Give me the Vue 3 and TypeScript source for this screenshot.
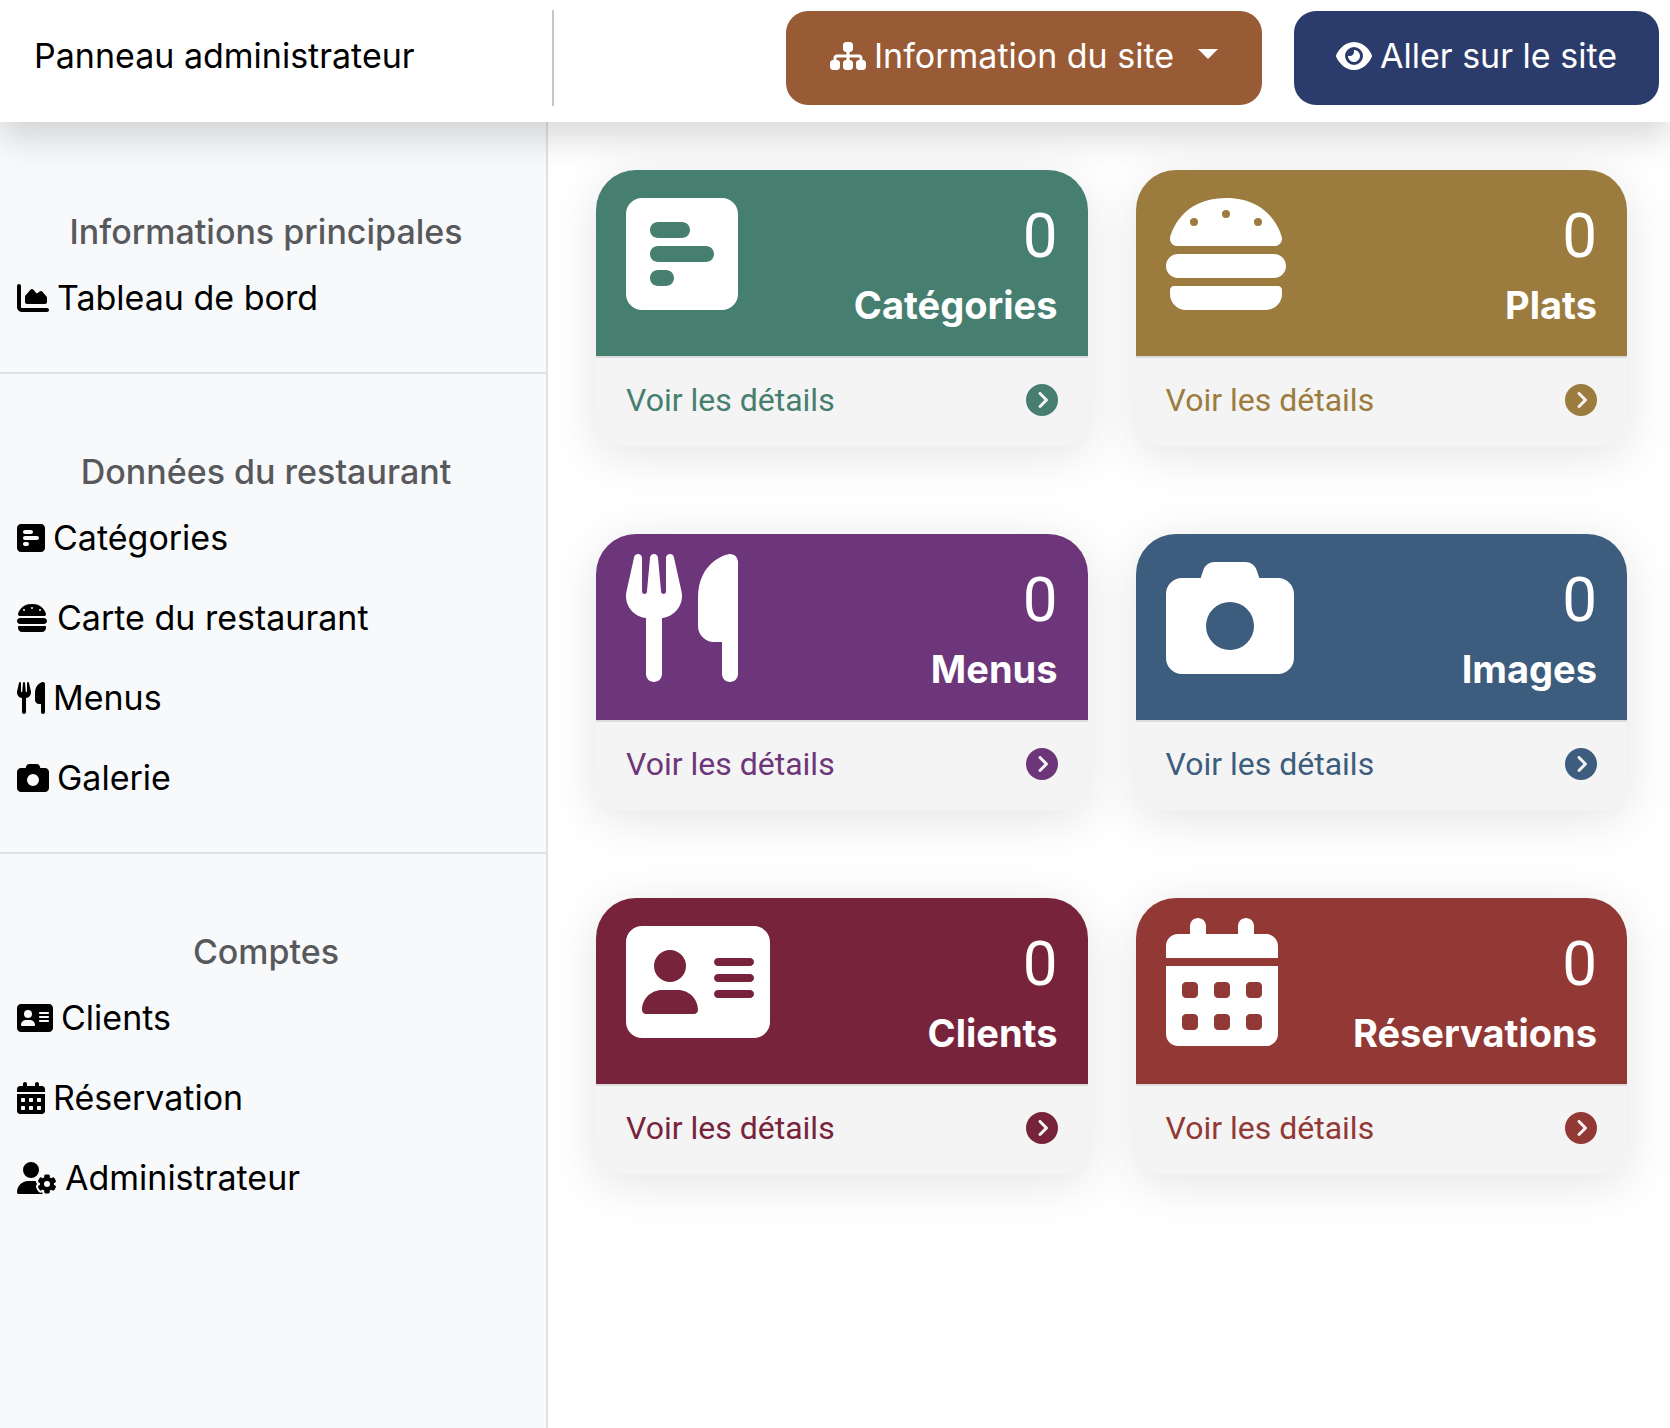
<script setup lang="ts">
interface Icon {
  box: string
  width: number
  path: string
}

const icons: Record<string, Icon> = {
  chart: {
    box: '0 0 512 512',
    width: 512,
    path: 'M64 64c0-17.7-14.3-32-32-32S0 46.3 0 64V400c0 44.2 35.8 80 80 80H480c17.7 0 32-14.3 32-32s-14.3-32-32-32H80c-8.8 0-16-7.2-16-16V64zm96 288H448c17.7 0 32-14.3 32-32V251.8c0-7.6-2.7-15-7.7-20.8l-65.8-76.8c-12.1-14.2-33.7-15-46.9-1.8l-21 21c-10 10-26.4 9.2-35.4-1.6l-39.2-47c-12.6-15.1-35.7-15.4-48.7-.6L135.9 215c-5.1 5.8-7.9 13.3-7.9 21.1v84c0 17.7 14.3 32 32 32z',
  },
  poll: {
    box: '0 0 448 512',
    width: 448,
    path: 'M448 96c0-35.3-28.7-64-64-64H64C28.7 32 0 60.7 0 96V416c0 35.3 28.7 64 64 64H384c35.3 0 64-28.7 64-64V96zM256 160c0 17.7-14.3 32-32 32l-96 0c-17.7 0-32-14.3-32-32s14.3-32 32-32l96 0c17.7 0 32 14.3 32 32zm64 64c17.7 0 32 14.3 32 32s-14.3 32-32 32l-192 0c-17.7 0-32-14.3-32-32s14.3-32 32-32l192 0zM192 352c0 17.7-14.3 32-32 32H128c-17.7 0-32-14.3-32-32s14.3-32 32-32h32c17.7 0 32 14.3 32 32z',
  },
  burger: {
    box: '16 0 512 512',
    width: 512,
    path: 'M61.1 224C45 224 32 211 32 194.9c0-1.9 .2-3.7 .6-5.6C37.9 168.3 78.8 32 256 32s218.1 136.3 223.4 157.3c.5 1.9 .6 3.7 .6 5.6c0 16.1-13 29.1-29.1 29.1H61.1zM144 128a16 16 0 1 0 -32 0 16 16 0 1 0 32 0zm240 16a16 16 0 1 0 0-32 16 16 0 1 0 0 32zM272 96a16 16 0 1 0 -32 0 16 16 0 1 0 32 0zM16 304c0-26.5 21.5-48 48-48H448c26.5 0 48 21.5 48 48s-21.5 48-48 48H64c-26.5 0-48-21.5-48-48zm16 96c0-8.8 7.2-16 16-16H464c8.8 0 16 7.2 16 16v16c0 35.3-28.7 64-64 64H96c-35.3 0-64-28.7-64-64V400z',
  },
  utensils: {
    box: '0 0 448 512',
    width: 448,
    path: 'M416 0C400 0 288 32 288 176V288c0 35.3 28.7 64 64 64h32V480c0 17.7 14.3 32 32 32s32-14.3 32-32V32c0-17.7-14.3-32-32-32zM64 16C64 7.8 57.9 1 49.7 .1S34.2 4.6 32.4 12.5L2.1 148.8C.7 155.1 0 161.5 0 167.9c0 45.9 35.1 83.6 80 87.7V480c0 17.7 14.3 32 32 32s32-14.3 32-32V255.6c44.9-4.1 80-41.8 80-87.7c0-6.4-.7-12.8-2.1-19.1L191.6 12.5c-1.8-8-9.3-13.3-17.4-12.4S160 7.8 160 16V150.2c0 5.4-4.4 9.8-9.8 9.8c-5.1 0-9.3-3.9-9.8-9L127.9 14.6C127.2 6.3 120.3 0 112 0s-15.2 6.3-15.9 14.6L83.7 151c-.5 5.1-4.7 9-9.8 9c-5.4 0-9.8-4.4-9.8-9.8V16z',
  },
  camera: {
    box: '0 0 512 512',
    width: 512,
    path: 'M149.1 64.8L138.7 96H64C28.7 96 0 124.7 0 160V416c0 35.3 28.7 64 64 64H448c35.3 0 64-28.7 64-64V160c0-35.3-28.7-64-64-64H373.3L362.9 64.8C356.4 45.2 338.1 32 317.4 32H194.6c-20.7 0-39 13.2-45.5 32.8zM256 192a96 96 0 1 1 0 192 96 96 0 1 1 0-192z',
  },
  idCard: {
    box: '0 0 576 512',
    width: 576,
    path: 'M64 32C28.7 32 0 60.7 0 96V416c0 35.3 28.7 64 64 64H512c35.3 0 64-28.7 64-64V96c0-35.3-28.7-64-64-64H64zM144 288h64c44.2 0 80 35.8 80 80c0 8.8-7.2 16-16 16H80c-8.8 0-16-7.2-16-16c0-44.2 35.8-80 80-80zM112 192a64 64 0 1 1 128 0 64 64 0 1 1 -128 0zM368 160H496c8.8 0 16 7.2 16 16s-7.2 16-16 16H368c-8.8 0-16-7.2-16-16s7.2-16 16-16zM368 224H496c8.8 0 16 7.2 16 16s-7.2 16-16 16H368c-8.8 0-16-7.2-16-16s7.2-16 16-16zM368 288H496c8.8 0 16 7.2 16 16s-7.2 16-16 16H368c-8.8 0-16-7.2-16-16s7.2-16 16-16z',
  },
  calendar: {
    box: '0 0 448 512',
    width: 448,
    path:
      'M128 0c17.7 0 32 14.3 32 32V64H288V32c0-17.7 14.3-32 32-32s32 14.3 32 32V64h48c26.5 0 48 21.5 48 48v48H0V112C0 85.5 21.5 64 48 64H96V32c0-17.7 14.3-32 32-32zM0 192H448V464c0 26.5-21.5 48-48 48H48c-26.5 0-48-21.5-48-48V192z' +
      [256, 384]
        .flatMap((y) =>
          [80, 208, 336].map(
            (x) =>
              `M${x} ${y}h32c8.8 0 16 7.2 16 16v32c0 8.8-7.2 16-16 16h-32c-8.8 0-16-7.2-16-16v-32c0-8.8 7.2-16 16-16z`,
          ),
        )
        .join(''),
  },
  userGear: {
    box: '0 0 640 512',
    width: 640,
    path: 'M224 0a128 128 0 1 1 0 256 128 128 0 1 1 0-256zM178.3 304h91.4c11.8 0 23.4 1.2 34.5 3.3c-2.1 18.5 7.4 35.6 21.8 44.8c-16.6 10.6-26.7 31.6-20 53.3c4 12.9 9.4 25.5 16.4 37.6s15.2 23.1 24.4 33c15.7 16.9 39.6 18.4 57.2 8.7v.9c0 9.2 2.7 18.5 7.9 26.3H29.7C13.3 512 0 498.7 0 482.3C0 383.8 79.8 304 178.3 304zM436 218.2c0-7 4.5-13.3 11.3-14.8c10.5-2.4 21.5-3.7 32.7-3.7s22.2 1.3 32.7 3.7c6.8 1.5 11.3 7.8 11.3 14.8v30.6c7.9 3.4 15.4 7.7 22.3 12.8l24.9-14.3c6.1-3.5 13.7-2.7 18.5 2.4c7.6 8.1 14.3 17.2 20.1 27.2s10.3 20.4 13.5 31c2.1 6.7-1.1 13.7-7.2 17.2l-25 14.4c.4 4 .7 8.1 .7 12.3s-.2 8.2-.7 12.3l25 14.4c6.1 3.5 9.2 10.5 7.2 17.2c-3.3 10.6-7.8 21-13.5 31s-12.5 19.1-20.1 27.2c-4.8 5.1-12.5 5.9-18.5 2.4l-24.9-14.3c-6.9 5.1-14.3 9.4-22.3 12.8v30.6c0 7-4.5 13.3-11.3 14.8c-10.5 2.4-21.5 3.7-32.7 3.7s-22.2-1.3-32.7-3.7c-6.8-1.5-11.3-7.8-11.3-14.8V454.8c-8-3.4-15.6-7.7-22.5-12.9l-24.7 14.3c-6.1 3.5-13.7 2.7-18.5-2.4c-7.6-8.1-14.3-17.2-20.1-27.2s-10.3-20.4-13.5-31c-2.1-6.7 1.1-13.7 7.2-17.2l24.8-14.3c-.4-4.1-.7-8.2-.7-12.4s.2-8.3 .7-12.4L343.8 325c-6.1-3.5-9.2-10.5-7.2-17.2c3.3-10.6 7.7-21 13.5-31s12.5-19.1 20.1-27.2c4.8-5.1 12.4-5.9 18.5-2.4l24.8 14.3c6.9-5.1 14.5-9.4 22.5-12.9V218.2zM480 303.9a48 48 0 1 1 0 96 48 48 0 1 1 0-96z',
  },
}

interface Section {
  title: string
  items: { icon: string; label: string }[]
}

const sections: Section[] = [
  { title: 'Informations principales', items: [{ icon: 'chart', label: 'Tableau de bord' }] },
  {
    title: 'Données du restaurant',
    items: [
      { icon: 'poll', label: 'Catégories' },
      { icon: 'burger', label: 'Carte du restaurant' },
      { icon: 'utensils', label: 'Menus' },
      { icon: 'camera', label: 'Galerie' },
    ],
  },
  {
    title: 'Comptes',
    items: [
      { icon: 'idCard', label: 'Clients' },
      { icon: 'calendar', label: 'Réservation' },
      { icon: 'userGear', label: 'Administrateur' },
    ],
  },
]

const cards = [
  { icon: 'poll', label: 'Catégories', count: 0, tone: 'green' },
  { icon: 'burger', label: 'Plats', count: 0, tone: 'gold' },
  { icon: 'utensils', label: 'Menus', count: 0, tone: 'purple' },
  { icon: 'camera', label: 'Images', count: 0, tone: 'blue' },
  { icon: 'idCard', label: 'Clients', count: 0, tone: 'maroon' },
  { icon: 'calendar', label: 'Réservations', count: 0, tone: 'red' },
]
</script>

<template>
  <div class="page">
    <header class="topbar">
      <a class="brand" href="#">Panneau administrateur</a>
      <div class="actions">
        <button class="btn btn-info" type="button" aria-haspopup="true">
          <svg class="icon" viewBox="0 0 576 512" width="36" height="32" aria-hidden="true">
            <path d="M208 80c0-26.5 21.5-48 48-48h64c26.5 0 48 21.5 48 48v64c0 26.5-21.5 48-48 48h-8v40H464c30.9 0 56 25.1 56 56v32h8c26.5 0 48 21.5 48 48v64c0 26.5-21.5 48-48 48H464c-26.5 0-48-21.5-48-48V368c0-26.5 21.5-48 48-48h8V288c0-4.4-3.6-8-8-8H312v40h8c26.5 0 48 21.5 48 48v64c0 26.5-21.5 48-48 48H256c-26.5 0-48-21.5-48-48V368c0-26.5 21.5-48 48-48h8V280H112c-4.4 0-8 3.6-8 8v32h8c26.5 0 48 21.5 48 48v64c0 26.5-21.5 48-48 48H48c-26.5 0-48-21.5-48-48V368c0-26.5 21.5-48 48-48h8V288c0-30.9 25.1-56 56-56H264V192h-8c-26.5 0-48-21.5-48-48V80z" />
          </svg>
          <span>Information du site</span>
          <span class="caret"></span>
        </button>
        <a class="btn btn-site" href="#">
          <svg class="icon" viewBox="0 0 576 512" width="36" height="32" aria-hidden="true">
            <path d="M288 32c-80.8 0-145.5 36.8-192.6 80.6C48.6 156 17.3 208 2.5 243.7c-3.3 7.9-3.3 16.7 0 24.6C17.3 304 48.6 356 95.4 399.4C142.5 443.2 207.2 480 288 480s145.5-36.8 192.6-80.6c46.8-43.5 78.1-95.4 93-131.1c3.3-7.9 3.3-16.7 0-24.6c-14.9-35.7-46.2-87.7-93-131.1C433.5 68.8 368.8 32 288 32zM144 256a144 144 0 1 1 288 0 144 144 0 1 1 -288 0zm144-64c0 35.3-28.7 64-64 64c-7.1 0-13.9-1.2-20.3-3.3c-5.5-1.8-11.9 1.6-11.7 7.4c.3 6.9 1.3 13.8 3.2 20.7c13.7 51.2 66.4 81.6 117.6 67.9s81.6-66.4 67.9-117.6c-11.1-41.5-47.8-69.4-88.6-71.1c-5.8-.2-9.2 6.1-7.4 11.7c2.1 6.4 3.3 13.2 3.3 20.3z" />
          </svg>
          <span>Aller sur le site</span>
        </a>
      </div>
    </header>

    <div class="body">
      <nav class="sidebar">
        <section v-for="section in sections" :key="section.title" class="group">
          <h2>{{ section.title }}</h2>
          <ul>
            <li v-for="item in section.items" :key="item.label">
              <a href="#">
                <svg
                  class="icon"
                  :viewBox="icons[item.icon].box"
                  :width="icons[item.icon].width / 16"
                  height="32"
                  aria-hidden="true"
                >
                  <path :d="icons[item.icon].path" />
                </svg>
                <span>{{ item.label }}</span>
              </a>
            </li>
          </ul>
        </section>
      </nav>

      <main class="cards">
        <article v-for="card in cards" :key="card.label" class="card" :class="card.tone">
          <div class="card-head">
            <svg
              class="icon"
              :viewBox="icons[card.icon].box"
              :width="icons[card.icon].width / 4"
              height="128"
              aria-hidden="true"
            >
              <path :d="icons[card.icon].path" />
            </svg>
            <div class="figures">
              <div class="count">{{ card.count }}</div>
              <div class="label">{{ card.label }}</div>
            </div>
          </div>
          <a class="card-foot" href="#">
            <span>Voir les détails</span>
            <svg class="icon" viewBox="0 0 512 512" width="32" height="32" aria-hidden="true">
              <path d="M0 256a256 256 0 1 0 512 0A256 256 0 1 0 0 256zM241 377c-9.4 9.4-24.6 9.4-33.9 0s-9.4-24.6 0-33.9l87-87-87-87c-9.4-9.4-9.4-24.6 0-33.9s24.6-9.4 33.9 0L345 239c9.4 9.4 9.4 24.6 0 33.9L241 377z" />
            </svg>
          </a>
        </article>
      </main>
    </div>
  </div>
</template>

<style>
body {
  margin: 0;
  background: #fff;
}
</style>

<style scoped>
.page {
  min-height: 100vh;
  display: flex;
  flex-direction: column;
  font-family: Inter, 'Liberation Sans', sans-serif;
  font-size: 34px;
  line-height: 48px;
  color: #000;
}

.page * {
  box-sizing: border-box;
}

a {
  color: inherit;
  text-decoration: none;
}

.icon {
  flex: none;
  fill: currentColor;
  fill-rule: evenodd;
}

.topbar {
  position: relative;
  z-index: 2;
  display: flex;
  justify-content: space-between;
  padding: 10px 11px 16px 0;
  background: #fff;
  box-shadow: 0 16px 32px rgba(0, 0, 0, 0.15);
}

.brand {
  flex: none;
  width: 554px;
  padding: 22px 34px 26px;
  border-right: 2px solid #c6c6c8;
}

.actions {
  display: flex;
  align-items: flex-start;
  gap: 32px;
  padding-top: 1px;
}

.btn {
  display: flex;
  align-items: center;
  gap: 8px;
  padding: 21px 44px 25px;
  border: 0;
  border-radius: 22px;
  font: inherit;
  color: #fff;
  white-space: nowrap;
}

.btn-info {
  background: #995a36;
}

.btn-site {
  padding-right: 42px;
  padding-left: 42px;
  background: #2b3c6c;
}

.caret {
  margin: 0 0 4px 16px;
  border: 10px solid transparent;
  border-top-color: currentColor;
  border-bottom: 0;
}

.body {
  flex: 1;
  display: flex;
}

.sidebar {
  position: relative;
  z-index: 1;
  flex: none;
  width: 548px;
  padding-top: 12px;
  background: #f8f9fb;
  border-right: 2px solid #dfe1e5;
}

.group {
  padding: 74px 0 34px;
  border-bottom: 2px solid #dfe1e8;
}

.group:last-child {
  border-bottom: 0;
}

.group h2 {
  margin: 0 0 2px;
  padding-right: 14px;
  font-size: inherit;
  font-weight: 500;
  text-align: center;
  color: #58595c;
}

.group ul {
  margin: 0;
  padding: 0;
  list-style: none;
}

.group a {
  display: flex;
  align-items: center;
  gap: 8px;
  padding: 16px 17px;
}

.cards {
  flex: 1;
  display: grid;
  grid-template-columns: 1fr 1fr;
  align-content: start;
  gap: 88px 48px;
  padding: 48px 43px 48px 48px;
}

.card {
  border-radius: 40px 40px 12px 12px;
  background: #f4f4f4;
  box-shadow: 0 8px 50px rgba(0, 0, 0, 0.11);
  font-family: Roboto, 'Liberation Sans', sans-serif;
}

.card-head {
  display: flex;
  justify-content: space-between;
  padding: 20px 30px 24px;
  border-radius: 40px 40px 0 0;
  background: var(--tone);
  color: #fff;
}

.figures {
  padding-top: 10px;
  text-align: right;
}

.count {
  font-size: 62px;
  line-height: 72px;
}

.label {
  margin-top: 6px;
  font-family: Inter, 'Liberation Sans', sans-serif;
  font-size: 38px;
  line-height: 54px;
  font-weight: 700;
}

.card-foot {
  display: flex;
  align-items: center;
  justify-content: space-between;
  padding: 18px 30px 22px;
  border-top: 2px solid #dcdcdc;
  border-radius: 0 0 12px 12px;
  font-size: 32px;
  color: var(--tone);
}

.green {
  --tone: #467e6f;
}

.gold {
  --tone: #9b7c3e;
}

.purple {
  --tone: #6e367a;
}

.blue {
  --tone: #3c5d7d;
}

.maroon {
  --tone: #77233c;
}

.red {
  --tone: #923935;
}
</style>
